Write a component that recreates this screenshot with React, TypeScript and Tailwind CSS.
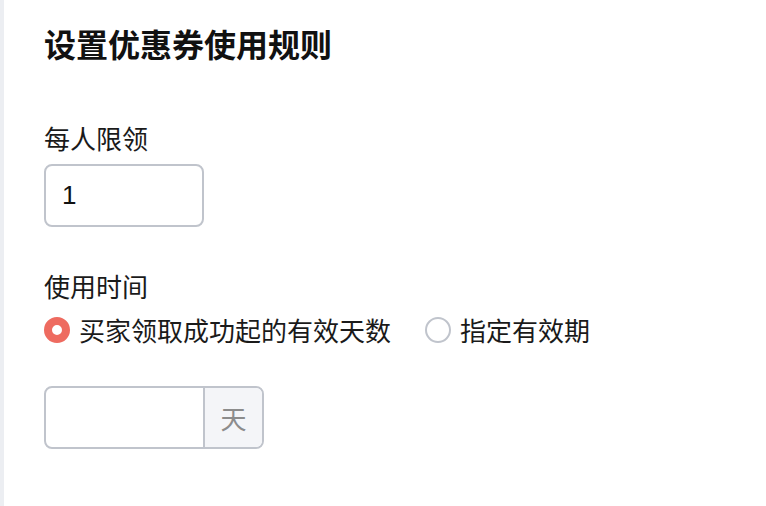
import { useState } from 'react';

const FONT = "font-['PingFang_SC','Noto_Sans_CJK_SC','Liberation_Sans',sans-serif]";

export default function App() {
  const [mode, setMode] = useState<'days' | 'range'>('days');
  const [limit, setLimit] = useState('1');
  const [days, setDays] = useState('');

  return (
    <div className={`flex h-[506px] w-[766px] bg-white ${FONT}`}>
      <div className="w-[4px] shrink-0 bg-[#eceef2]" />
      <div className="flex flex-1 flex-col pl-[40px] pt-[21px]">
        <h1 className="text-[32px] font-bold leading-[44px] text-[#111]">设置优惠券使用规则</h1>

        {/* 每人限领 */}
        <label className="mt-[55px] text-[26px] leading-[36px] text-[#1a1a1a]">每人限领</label>
        <input
          value={limit}
          onChange={(e) => setLimit(e.target.value)}
          className="mt-[8px] h-[63px] w-[160px] rounded-[8px] border-2 border-[#c0c4cc] px-[16px] font-['Liberation_Sans',sans-serif] text-[26px] text-[#111] outline-none"
        />

        {/* 使用时间 */}
        <div className="mt-[41px] text-[26px] leading-[36px] text-[#1a1a1a]">使用时间</div>
        <div className="mt-[8px] flex h-[36px] items-center">
          <Radio checked={mode === 'days'} onClick={() => setMode('days')} label="买家领取成功起的有效天数" />
          <div className="w-[34px]" />
          <Radio checked={mode === 'range'} onClick={() => setMode('range')} label="指定有效期" />
        </div>

        <div className="mt-[38px] flex h-[63px] w-[220px] overflow-hidden rounded-[8px] border-2 border-[#c0c4cc]">
          <input
            value={days}
            onChange={(e) => setDays(e.target.value)}
            className="w-[157px] px-[16px] text-[26px] text-[#111] outline-none"
          />
          <div className="flex flex-1 items-center justify-center border-l-2 border-[#c0c4cc] bg-[#f4f5f8] text-[26px] text-[#8c8c8c]">
            天
          </div>
        </div>
      </div>
    </div>
  );
}

function Radio({ checked, onClick, label }: { checked: boolean; onClick: () => void; label: string }) {
  return (
    <button type="button" onClick={onClick} className="flex items-center gap-[9px]">
      {checked ? (
        <span className="h-[26px] w-[26px] rounded-full border-[8px] border-[#ee6b60] bg-white" />
      ) : (
        <span className="h-[26px] w-[26px] rounded-full border-2 border-[#c0c4cc] bg-white" />
      )}
      <span className="text-[26px] leading-[36px] text-[#1a1a1a]">{label}</span>
    </button>
  );
}
